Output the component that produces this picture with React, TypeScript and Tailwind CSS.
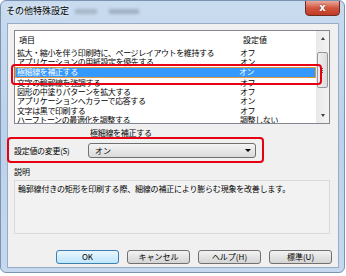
import React from "react";

const jp = { fontFamily: '"Noto Sans CJK JP", "Noto Sans", sans-serif' };

const rows = [
  { name: "拡大・縮小を伴う印刷時に、ページレイアウトを維持する", value: "オフ", h: "h-[9.5px]" },
  { name: "アプリケーションの用紙設定を優先する", value: "オン", h: "h-[9px]" },
  { name: "極細線を補正する", value: "オン", h: "h-[11.5px]", selected: true },
  { name: "文字の輪郭線を強調する", value: "オフ", h: "h-[9px]" },
  { name: "図形の中塗りパターンを拡大する", value: "オフ", h: "h-[9.5px]" },
  { name: "アプリケーションへカラーで応答する", value: "オン", h: "h-[9.5px]" },
  { name: "文字は黒で印刷する", value: "オフ", h: "h-[9.5px]" },
  { name: "ハーフトーンの最適化を調整する", value: "調整しない", h: "h-[9.5px]" },
];

function Button({ label, primary }: { label: string; primary?: boolean }) {
  return (
    <div
      className={
        "w-[63px] h-[14px] rounded-[3px] border flex items-center justify-center text-[8px] leading-none text-black " +
        (primary
          ? "border-[#3c7fb1] bg-gradient-to-b from-[#eaf6fd] to-[#bee6fd]"
          : "border-[#707070] bg-gradient-to-b from-[#f2f2f2] to-[#d4d4d4]")
      }
    >
      {label}
    </div>
  );
}

export default function App() {
  return (
    <div className="w-[346px] h-[276px] bg-white" style={jp}>
      <div className="relative w-[345px] h-[273px] rounded-[6px] border border-[#7a93b3] bg-gradient-to-b from-[#c9dbef] via-[#bcd1ea] to-[#c6d8ed] overflow-hidden">
        {/* title bar */}
        <div className="h-[22px] flex items-start justify-between pl-[5px] pr-[4px]">
          <div className="flex items-center h-[20px] gap-[6px]">
            <span className="text-[9px] text-black [text-shadow:0_0_5px_#fff]">その他特殊設定</span>
            <span className="w-[22px] h-[5px] bg-[#9aa8b8] blur-[1.5px] opacity-70" />
            <span className="ml-[6px] w-[30px] h-[5px] bg-[#8f9fb2] blur-[1.5px] opacity-70" />
          </div>
          <div className="w-[35px] h-[16px] -mt-[1px] rounded-b-[4px] border border-[#6d2c24] bg-gradient-to-b from-[#e9a99c] via-[#d0553f] to-[#c23a26] flex items-center justify-center">
            <span className="text-white text-[10px] font-bold leading-none [text-shadow:0_0_2px_#6d2c24]" style={{ fontFamily: '"DejaVu Sans", sans-serif' }}>
              x
            </span>
          </div>
        </div>

        {/* client area */}
        <div className="ml-[6px] w-[332px] h-[245px] border border-[#97acc6] bg-[#f0f0f0] flex flex-col">
          {/* list */}
          <div className="relative mt-[6px] ml-[6px] w-[316px] h-[94px] border border-[#828790] bg-white flex">
            <div className="flex-1 flex flex-col overflow-hidden">
              <div className="h-[17px] shrink-0 flex items-center text-[8px] text-black">
                <span className="pl-[4px] w-[225px]">項目</span>
                <span className="pl-[3px]">設定値</span>
              </div>
              {rows.map((r) => (
                <div
                  key={r.name}
                  className={
                    "shrink-0 flex items-center text-[8px] leading-none tracking-[-0.4px] whitespace-nowrap overflow-hidden " +
                    r.h +
                    (r.selected ? " bg-[#3399ff] text-white border border-[#e0963c]" : " text-black")
                  }
                >
                  <span className={r.selected ? "pl-[1px] w-[223px]" : "pl-[2px] w-[225px]"}>{r.name}</span>
                  <span>{r.value}</span>
                </div>
              ))}
            </div>
            {/* scrollbar */}
            <div className="w-[13px] shrink-0 bg-gradient-to-r from-[#e8e8e8] to-[#f4f4f4] flex flex-col">
              <div className="h-[15px] flex items-center justify-center">
                <div className="w-0 h-0 border-l-[2.5px] border-r-[2.5px] border-b-[3px] border-l-transparent border-r-transparent border-b-[#444]" />
              </div>
              <div className="flex-1 pt-[6px] px-[1px]">
                <div className="h-[36px] rounded-[2px] border border-[#979797] bg-gradient-to-r from-[#f0f0f0] to-[#dcdcdc] flex flex-col items-center justify-center gap-[1px]">
                  <div className="w-[1px] h-[1px] bg-[#555]" />
                  <div className="w-[1px] h-[1px] bg-[#555]" />
                  <div className="w-[1px] h-[1px] bg-[#555]" />
                </div>
              </div>
              <div className="h-[15px] flex items-center justify-center">
                <div className="w-0 h-0 border-l-[2.5px] border-r-[2.5px] border-t-[3px] border-l-transparent border-r-transparent border-t-[#444]" />
              </div>
            </div>
            {/* annotation */}
            <div className="absolute left-[-4px] top-[33px] w-[311px] h-[21px] rounded-[4px] border-2 border-[#e60012]" />
          </div>

          <div className="mt-[3px] ml-[82px] h-[11px] text-[8px] leading-[11px] tracking-[-0.3px] text-black">極細線を補正する</div>

          <div className="relative h-[25px] flex items-center">
            <span className="ml-[6px] w-[74px] text-[8px] text-black tracking-[-0.3px]">設定値の変更(S)</span>
            <div className="w-[168px] h-[15px] rounded-[3px] border border-[#707070] bg-gradient-to-b from-[#f4f4f4] to-[#dadada] flex items-center justify-between pl-[6px] pr-[4px]">
              <span className="text-[8px] text-black">オン</span>
              <div className="w-0 h-0 border-l-[3px] border-r-[3px] border-t-[3px] border-l-transparent border-r-transparent border-t-black" />
            </div>
            <div className="absolute left-[-1px] top-[-1px] w-[257px] h-[26px] rounded-[4px] border-2 border-[#e60012]" />
          </div>

          <div className="mt-[3px] ml-[6px] h-[11px] text-[8px] leading-[11px] text-black">説明</div>
          <div className="mt-[3px] ml-[6px] w-[316px] h-[54px] border border-[#d9d9d9] bg-[#f2f2f2] pl-[3px] pt-[3px] text-[8px] leading-[10px] tracking-[-0.2px] text-black">
            輪郭線付きの矩形を印刷する際、細線の補正により膨らむ現象を改善します。
          </div>

          <div className="mt-[16px] pr-[6px] flex justify-end gap-[8px]">
            <Button label="OK" primary />
            <Button label="キャンセル" />
            <Button label="ヘルプ(H)" />
            <Button label="標準(U)" />
          </div>
        </div>
      </div>
    </div>
  );
}
